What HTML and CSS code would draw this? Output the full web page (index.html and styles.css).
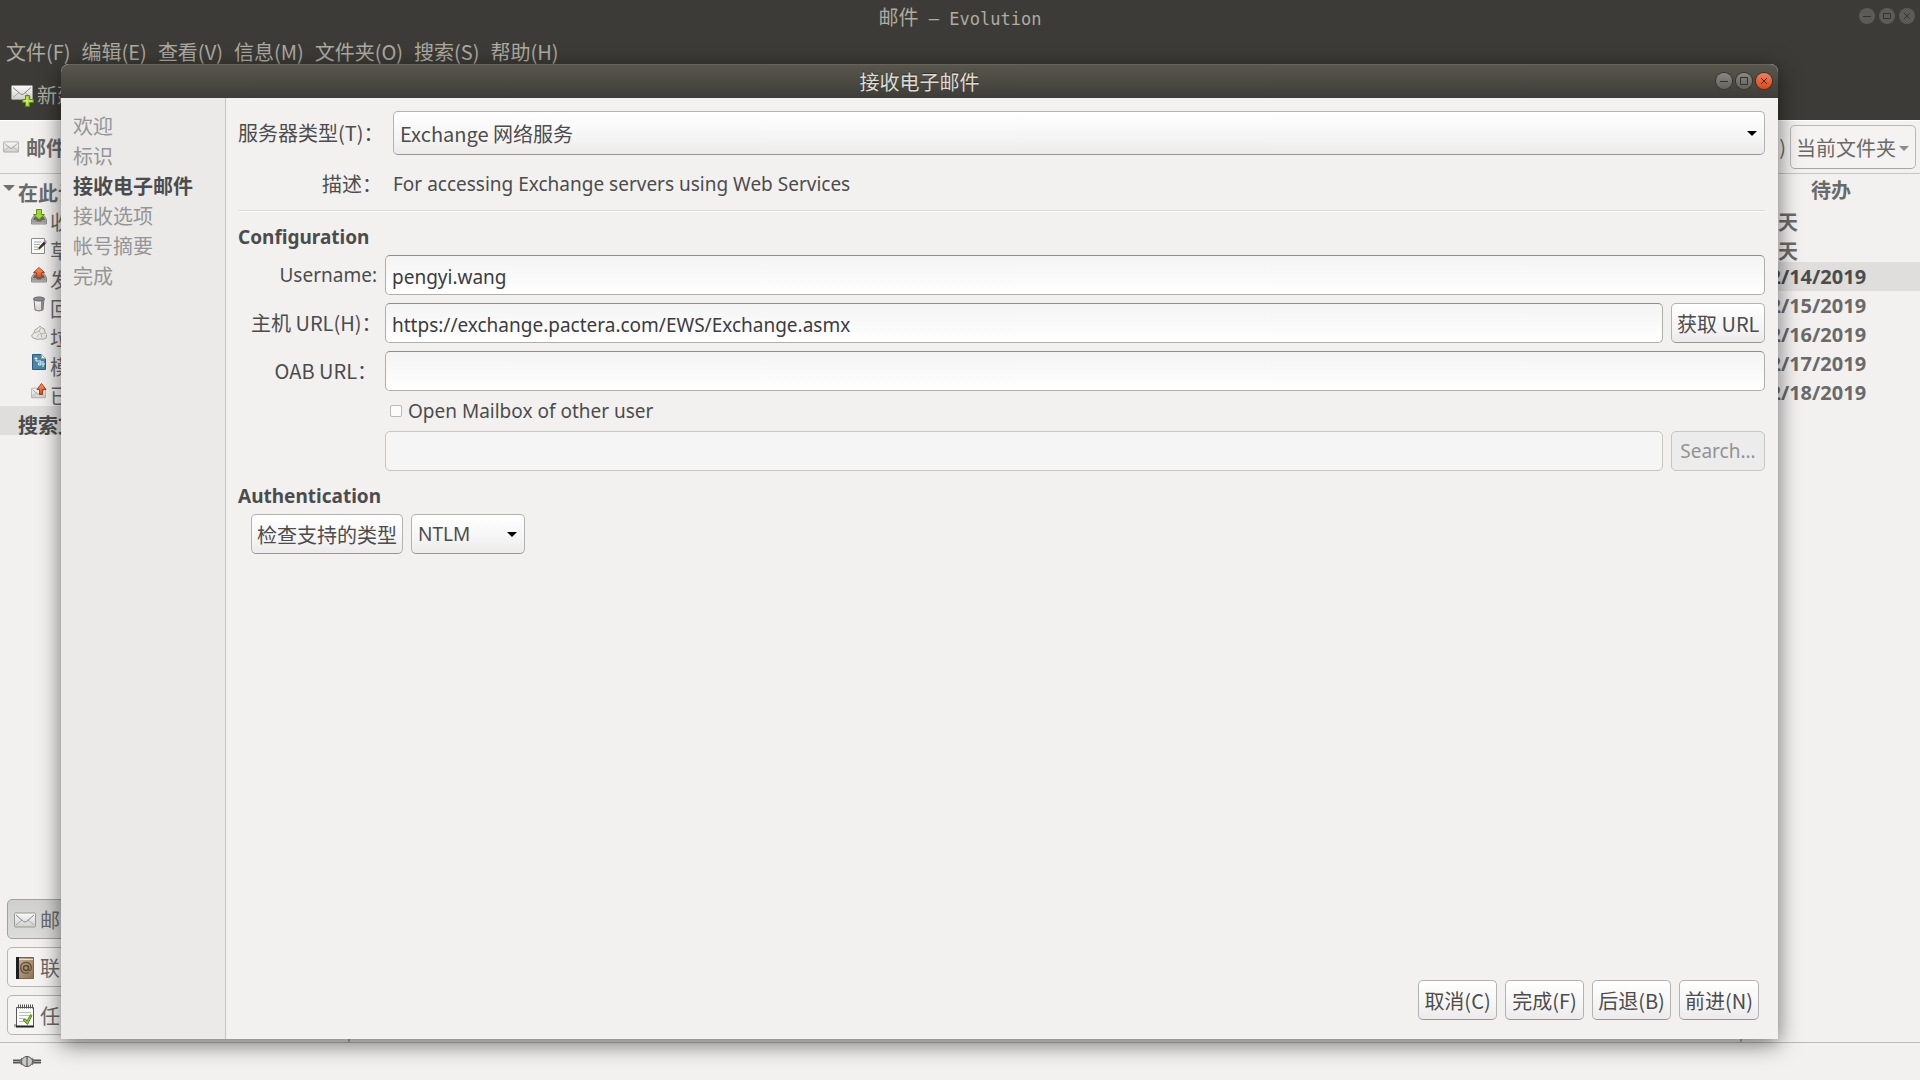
FILE: index.html
```html
<!DOCTYPE html>
<html lang="zh-CN">
<head>
<meta charset="utf-8">
<title>邮件 — Evolution</title>
<link rel="stylesheet" href="styles.css">
</head>
<body>
<svg class="defs" width="0" height="0" aria-hidden="true">
  <defs>
    <linearGradient id="paper" x1="0" y1="0" x2="0" y2="1"><stop offset="0" stop-color="#fafafa"/><stop offset="1" stop-color="#cfcfcc"/></linearGradient>
    <linearGradient id="tray" x1="0" y1="0" x2="0" y2="1"><stop offset="0" stop-color="#c9c9c6"/><stop offset="1" stop-color="#858583"/></linearGradient>
    <linearGradient id="leather" x1="0" y1="0" x2="1" y2="1"><stop offset="0" stop-color="#c9b196"/><stop offset="1" stop-color="#8a7355"/></linearGradient>
    <linearGradient id="orange" x1="0" y1="0" x2="0" y2="1"><stop offset="0" stop-color="#f9a06a"/><stop offset="1" stop-color="#dd4814"/></linearGradient>
    <symbol id="envelope" viewBox="0 0 22 15"><rect x=".5" y=".5" width="21" height="14" rx="1" fill="url(#paper)" stroke="#989894"/><path d="M2 12.500 8 7.500M20 12.500 14 7.500" stroke="#aaa" fill="none"/><path d="M2 2.500 9.500 9q1.500 1 3 0L20 2.500" stroke="#858582" fill="none"/></symbol>
    <symbol id="tray-box" viewBox="0 0 16 10"><path d="M3 1h10l2.500 4v4.500H.5V5z" fill="url(#tray)" stroke="#8b8b88"/><path d="M3.500 2h9l1.500 3.500h-3l-1 1.500H6L5 5.500H2z" fill="#666664"/><path d="M1 8.500h14" stroke="#bdbdba"/></symbol>
  </defs>
</svg>

<div class="app">
  <header class="app-head">
    <div class="app-title">
      <h1>邮件<span class="mono"> — Evolution</span></h1>
      <div class="win-buttons">
        <button aria-label="最小化"><svg viewBox="0 0 16 16"><path d="M4 8.500h8"/></svg></button>
        <button aria-label="最大化"><svg viewBox="0 0 16 16"><path d="M4.500 5.500h7v5h-7z"/></svg></button>
        <button aria-label="关闭"><svg viewBox="0 0 16 16"><path d="m5 5 6 6m0-6-6 6"/></svg></button>
      </div>
    </div>
    <nav class="menubar">
      <button>文件(F)</button><button>编辑(E)</button><button>查看(V)</button><button>信息(M)</button><button>文件夹(O)</button><button>搜索(S)</button><button>帮助(H)</button>
    </nav>
    <div class="toolbar">
      <button>
        <svg width="24" height="24" viewBox="0 0 24 24"><use href="#envelope" x="0" y="1" width="22" height="17"/><path d="M14.500 12.500h4v4h4v3h-4v4h-4v-4h-3v-3h3z" fill="#a5d02c" stroke="#5a8a10"/><path d="M16 14v8M13 18h8" stroke="#dff08a"/></svg>新建
      </button>
    </div>
  </header>

  <div class="app-body">
    <aside class="folders">
      <div class="pane-head"><svg width="16" height="12"><use href="#envelope" width="16" height="12"/></svg>邮件</div>
      <ul class="tree">
        <li class="root"><svg class="expander" width="12" height="7"><path d="M0 0h12L6 6z" fill="#70706d"/></svg>在此计</li>
        <li><svg width="16" height="16"><use href="#tray-box" y="5" width="16" height="11"/><path d="M5.500.5h5v5h3L8 10.500 2.500 5.500h3z" fill="#a6d633" stroke="#5d9412"/></svg>收</li>
        <li><svg width="16" height="16"><path d="M.5.5h13v15H.5z" fill="#fafafa" stroke="#8e8e8b"/><path d="M3 4h7M3 6.500h6M3 9h4M3 11.500h3" stroke="#aaa"/><path d="m7 10 6-6.500 2 2L8.500 11.500z" fill="#333"/><path d="m6 12 1-2.500 2 2z" fill="#c4a000"/><path d="m13 3.500 1.500-1.500 1.500 2-1 1.500z" fill="#d08acb"/></svg>草</li>
        <li><svg width="16" height="16"><use href="#tray-box" y="5" width="16" height="11"/><path d="M5.500 10.500h5v-5h3L8 .5 2.500 5.500h3z" fill="url(#orange)" stroke="#b8401c"/></svg>发</li>
        <li><svg width="16" height="16"><path d="M3 3h10l-1 11q-4 2-8 0z" fill="url(#paper)" stroke="#777"/><path d="M11 5v9" stroke="#888" stroke-width="2"/><ellipse cx="8" cy="3" rx="5.500" ry="2" fill="#8d8d90" stroke="#66666a"/></svg>回</li>
        <li><svg width="16" height="16"><path d="M2 13q-3-3 1-5 0-4 4-5l2-2 2 2q3 0 3 4 3 2 1 6-3 2-5 1-4 1-8-1z" fill="#e9e9e4" stroke="#a5a59f"/><path d="M4 8l4-2 2 3 4-1M6 12l2-3M8 6l2-3M10 9l1 4" stroke="#b5b5af" fill="none"/></svg>垃</li>
        <li><svg width="16" height="16"><path d="M1.500.5h9l4 4v11h-13z" fill="#4a87ab" stroke="#2a5f80"/><path d="M10.500.5v4h4z" fill="#fff" stroke="#aaa"/><path d="M5 3v4h2M3.500 4.500h3M7 7h3v4H7.500V9H10M12 7v6m-1-3h3" stroke="#e8f2f8" fill="none"/></svg>模</li>
        <li><svg width="16" height="16"><use href="#envelope" y="4" width="15" height="12"/><path d="M8.500 11.500h3v-5h3.500L10.500.5 6 6.500h2.500z" fill="url(#orange)" stroke="#b83a10"/></svg>已</li>
        <li class="root selected">搜索文</li>
      </ul>
      <div class="switcher">
        <button class="active"><svg width="22" height="24"><use href="#envelope" y="4" width="22" height="16"/></svg>邮</button>
        <button><svg width="22" height="24"><path d="M3.500 1.500h16v21h-16z" fill="url(#leather)" stroke="#7a6348"/><path d="M2 1h3v22H2z" fill="#1b1f24"/><path d="M5 3.500h14" stroke="#e8ddd0"/><circle cx="12" cy="12" r="2.500" fill="none" stroke="#5d4a33" stroke-width="1.500"/><path d="M14.500 9.500v4q1 2 2.500 0 1-4-2-6.500-5-2-8 2-1 5 2 7.500 3 1.500 6 0" fill="none" stroke="#5d4a33" stroke-width="1.200"/></svg>联</button>
        <button><svg width="22" height="24"><path d="M0 20h3v3H0z" fill="#aaa"/><path d="M2.500 3.500h17v19h-17z" fill="#fbfbfa" stroke="#555753"/><path d="M2 22.500h18" stroke="#222" stroke-width="2"/><path d="M4 2.500h15" stroke="#555" stroke-width="4" stroke-dasharray="1 1"/><path d="M5 8.500h12M5 11.500h12M5 14.500h6M5 17.500h5" stroke="#bbb"/><path d="m9 16 2.500-1 1.500 2 3.500-6.500 1.500 1-4.500 9z" fill="#8cc63a" stroke="#5a8f1a"/></svg>任</button>
      </div>
    </aside>
    <main class="messages">
      <div class="pane-head filter">
        <span>)</span>
        <button class="scope">当前文件夹<i class="caret"></i></button>
      </div>
    </main>
    <aside class="todo">
      <h2>待办</h2>
      <ul>
        <li class="cjk">今天</li><li class="cjk">明天</li><li class="selected">12/14/2019</li><li>12/15/2019</li><li>12/16/2019</li><li>12/17/2019</li><li>12/18/2019</li>
      </ul>
    </aside>
  </div>

  <footer class="statusbar">
    <svg width="28" height="14"><path d="M0 6.500h28" stroke="#555" stroke-width="4"/><path d="M0 6.500h28" stroke="#aaa"/><path d="M9 2.500q-5 4 0 8zM19 2.500q5 4 0 8z" fill="#777"/><ellipse cx="14" cy="6.500" rx="5.500" ry="5" fill="#c9c9c5" stroke="#555753"/><path d="M14 1.500v10" stroke="#444"/></svg>
  </footer>
</div>

<section class="dialog" role="dialog" aria-labelledby="dialog-title">
  <header class="dialog-title">
    <h2 id="dialog-title">接收电子邮件</h2>
    <div class="win-buttons">
      <button aria-label="最小化"><svg viewBox="0 0 16 16"><path d="M4 8.500h8"/></svg></button>
      <button aria-label="最大化"><svg viewBox="0 0 16 16"><path d="M4.500 4.500h7v7h-7z"/></svg></button>
      <button class="close" aria-label="关闭"><svg viewBox="0 0 16 16"><path d="m5 5 6 6m0-6-6 6"/></svg></button>
    </div>
  </header>
  <div class="dialog-body">
    <ol class="steps">
      <li>欢迎</li><li>标识</li><li class="current">接收电子邮件</li><li>接收选项</li><li>帐号摘要</li><li>完成</li>
    </ol>
    <form class="page">
      <div class="server">
        <label for="type">服务器类型(T)：</label>
        <span class="combo tall"><select id="type"><option>Exchange 网络服务</option></select></span>
        <span>描述：</span>
        <p class="latin">For accessing Exchange servers using Web Services</p>
      </div>
      <hr>
      <h3>Configuration</h3>
      <div class="config">
        <label class="latin" for="user">Username:</label>
        <input class="wide" id="user" type="text" value="pengyi.wang">
        <label for="host">主机 URL(H)：</label>
        <input id="host" type="text" value="https://exchange.pactera.com/EWS/Exchange.asmx">
        <button type="button">获取 URL</button>
        <label for="oab">OAB URL：</label>
        <input class="wide" id="oab" type="text">
        <label class="check latin"><input type="checkbox">Open Mailbox of other user</label>
        <input class="second" type="text" aria-label="Mailbox" disabled>
        <button class="latin" type="button" disabled>Search...</button>
      </div>
      <h3 class="auth-head">Authentication</h3>
      <div class="auth">
        <button type="button">检查支持的类型</button>
        <span class="combo"><select class="latin" aria-label="Authentication"><option>NTLM</option></select></span>
      </div>
      <div class="actions">
        <button type="button">取消(C)</button><button type="button">完成(F)</button><button type="button">后退(B)</button><button type="button">前进(N)</button>
      </div>
    </form>
  </div>
</section>
</body>
</html>
```
FILE: styles.css
```css
* { box-sizing: border-box; margin: 0; padding: 0; }
body {
  font: 20px/30px "Noto Sans CJK SC", "Noto Sans", sans-serif;
  color: #4c4c4c;
  background: #f2f1f0;
  overflow: hidden;
}
button, input, select { font: inherit; color: inherit; }
button { white-space: nowrap; }
ul, ol { list-style: none; }
.defs { position: absolute; }
.latin { font-family: "Noto Sans", "Noto Sans CJK SC", sans-serif; font-size: 19px; }

/* main window */
.app { display: flex; flex-direction: column; min-height: 100vh; color: #6a6a69; }
.app-head { background: #3c3b37; color: #aeaba2; height: 120px; flex: none; }
.app-head button { background: none; border: 0; }
.app-title { display: grid; grid-template-columns: 1fr auto 1fr; align-items: center; height: 36px; }
.app-title h1 { grid-column: 2; font-size: 20px; font-weight: 400; white-space: pre; }
.mono { font-family: "DejaVu Sans Mono", monospace; font-size: 17px; }
.win-buttons { display: flex; gap: 4px; justify-content: flex-end; }
.win-buttons button {
  width: 16px; height: 16px; border: 0; border-radius: 8px;
  background: #605f5b; display: flex;
}
.win-buttons svg { width: 16px; height: 16px; fill: none; stroke: #34332f; stroke-width: 1; }
.app-title .win-buttons { padding: 0 5px 4px 0; }
.app-title .win-buttons button { background: #5c5b57; }
.menubar { display: flex; gap: 11px; padding-left: 6px; height: 32px; }
.toolbar { padding: 12px 11px 0; }
.toolbar button { display: flex; gap: 2px; align-items: center; }
.toolbar svg { flex: none; }

.app-body { flex: 1; display: grid; grid-template-columns: 350px 1fr 180px; grid-template-rows: 54px 1fr; }
.pane-head { height: 54px; border-bottom: 1px solid #c6c5c3; border-top: 1px solid #fff; display: flex; align-items: center; }
.folders { grid-row: 1 / 3; display: flex; flex-direction: column; border-right: 2px solid #b4b4b2; }
.folders .pane-head { gap: 7px; padding: 2px 0 0 3px; font-weight: 700; }
.folders .pane-head svg { margin-bottom: 2px; }
.messages { grid-column: 2 / 4; }
.filter { justify-content: flex-end; padding-right: 4px; gap: 4px; }
.filter .scope {
  display: flex; align-items: center; gap: 3px; height: 44px; padding: 2px 6px 0 5px;
  border: 1px solid #b8b8b6; border-bottom-color: #a5a5a3; border-radius: 5px; background: #f4f3f2;
}
.caret { border: 5px solid transparent; border-top-color: #8b8b89; border-bottom: 0; }
.tree li {
  display: flex; align-items: flex-start; gap: 3px; height: 29px; padding-left: 31px;
  line-height: 38px; white-space: nowrap;
}
.tree li svg { margin-top: 6px; flex: none; }
.tree .root { padding-left: 18px; font-weight: 700; }
.tree .root .expander { margin: 11px 0 0 -15px; }
.selected { background: #dfdedd; color: #4c4c4c; }
.switcher { margin-top: auto; padding: 0 7px 7px; display: grid; gap: 8px; }
.switcher button {
  display: flex; align-items: center; gap: 4px; height: 40px; padding: 2px 0 0 6px;
  border: 1px solid #b5b5b3; border-radius: 5px; background: #f5f4f3;
}
.switcher .active { background: linear-gradient(#cfcfce, #dcdcdb); border-color: #a2a2a0; }
.todo { grid-column: 3; grid-row: 2; font-weight: 700; border-left: 2px solid #b4b4b2; }
.todo h2 { font-size: 20px; text-align: center; height: 30px; line-height: 32px; }
.todo li { height: 29px; line-height: 29px; padding-left: 16px; font-family: "Noto Sans", "Noto Sans CJK SC", sans-serif; }
.todo .cjk { line-height: 38px; }
.statusbar { height: 38px; flex: none; border-top: 1px solid #bcbcba; padding: 12px 13px; display: flex; }

/* account assistant window, floating over the main window */
.dialog {
  position: absolute; top: 64px; right: 142px; bottom: 41px; left: 61px;
  display: flex; flex-direction: column;
  background: #f2f1f0; border-radius: 8px 8px 0 0;
  box-shadow: 0 5px 22px rgba(0, 0, 0, .55);
}
.dialog-title {
  display: grid; grid-template-columns: 1fr auto 1fr; align-items: center; height: 34px; flex: none;
  background: linear-gradient(#59574c, #3d3c38); border-top: 1px solid #67655a;
  border-radius: 8px 8px 0 0; color: #dfdbd2;
}
.dialog-title h2 { grid-column: 2; font-size: 20px; font-weight: 400; text-shadow: 0 -1px #2c2b28; }
.dialog-title .win-buttons { padding: 0 6px 2px 0; }
.dialog-title .win-buttons button { background: linear-gradient(#8a8881, #62615b); box-shadow: 0 0 0 1px #35342f; }
.dialog-title .win-buttons .close { background: linear-gradient(#f37e5c, #de4a16); }
.dialog-body { flex: 1; display: flex; }
.steps { width: 165px; flex: none; padding: 13px 12px; background: #ebeae9; border-right: 1px solid #c3c3c2; color: #959593; }
.steps .current { color: #4c4c4c; font-weight: 700; }
.page { flex: 1; display: flex; flex-direction: column; padding: 13px 13px 19px 12px; }
.server { display: grid; grid-template-columns: 144px 1fr; column-gap: 11px; row-gap: 14px; align-items: center; }
.server > :nth-child(odd), .config > label { text-align: right; white-space: nowrap; }
hr { border: 0; border-top: 1px solid #dcdbd9; border-bottom: 1px solid #fbfbfa; margin: 11px 0 10px; }
h3 { font: 700 19px/30px "Noto Sans", sans-serif; }
.page button, .combo select {
  height: 40px; padding: 2px 5px 0; border: 1px solid #b3b3b1; border-bottom-color: #969694; border-radius: 5px;
  background: linear-gradient(#fff, #f6f5f5 60%, #eceaea);
}
.page .latin:disabled { padding: 0 5px; }
.config { display: grid; grid-template-columns: 126px 1fr 94px; gap: 8px; padding-left: 13px; margin-top: 3px; align-items: center; }
.page input[type="text"] {
  min-width: 0; width: 100%; height: 40px; padding: 3px 6px 0;
  border: 1px solid #aeaeac; border-top-color: #8d8d8c; border-radius: 5px;
  background: linear-gradient(#f4f4f4, #fff); color: #3c3c3c;
  font-family: "Noto Sans", "Noto Sans CJK SC", sans-serif; font-size: 19px;
}
.config .wide { grid-column: 2 / 4; }
.config .second { grid-column: 2; }
.page input[type="text"]:disabled { background: #f5f5f5; border-color: #c6c6c4; }
.page button:disabled { background: #ececec; border-color: #c6c6c4; color: #939391; }
.config .check { grid-column: 2 / 4; display: flex; align-items: center; gap: 6px; height: 24px; padding-left: 5px; }
.check input { appearance: none; width: 12px; height: 12px; border: 1px solid #b9b9b7; border-radius: 2px; background: #fcfcfc; }
.auth-head { margin-top: 10px; }
.auth { display: flex; gap: 8px; padding-left: 13px; margin-top: 3px; }
.combo { position: relative; display: flex; }
.combo::after {
  content: ""; position: absolute; right: 8px; top: 50%; margin-top: -2px; pointer-events: none;
  border: 5px solid transparent; border-top-color: #000; border-bottom: 0;
}
.combo select { appearance: none; width: 114px; padding: 0 6px; }
.combo.tall select { width: 100%; height: 44px; padding-top: 2px; }
.actions { margin-top: auto; display: flex; justify-content: flex-end; gap: 8px; padding-right: 6px; }
.actions button { min-width: 79px; }
```
